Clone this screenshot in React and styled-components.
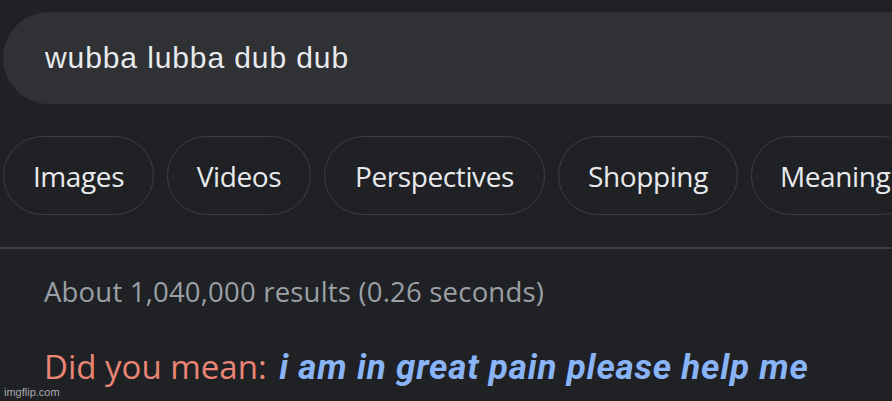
import React from 'react';
import styled, { createGlobalStyle } from 'styled-components';

const Global = createGlobalStyle`
  html, body {
    margin: 0;
    padding: 0;
    background: #202124;
  }
`;

const Page = styled.main`
  position: relative;
  width: 892px;
  height: 401px;
  overflow: hidden;
  background: #202124;
  display: flex;
  flex-direction: column;
`;

const SearchBar = styled.div`
  margin: 12px 0 0 3px;
  width: 1000px;
  height: 92px;
  border-radius: 46px;
  background: #303134;
  display: flex;
  align-items: center;
  padding-left: 42px;
  box-sizing: border-box;
  font-family: 'Liberation Sans', Arial, sans-serif;
  font-size: 30px;
  letter-spacing: 0.9px;
  color: #e8eaed;
`;

const ChipRow = styled.nav`
  margin: 32px 0 0 3px;
  display: flex;
  gap: 13px;
  white-space: nowrap;
`;

const Chip = styled.div`
  flex: none;
  width: ${(p) => p.$w}px;
  height: 79px;
  box-sizing: border-box;
  border: 1.5px solid #3c4043;
  border-radius: 40px;
  display: flex;
  align-items: center;
  justify-content: ${(p) => (p.$left ? 'flex-start' : 'center')};
  padding-left: ${(p) => (p.$left ? 28 : 0)}px;
  font-family: 'Open Sans', sans-serif;
  font-size: 28px;
  letter-spacing: -0.4px;
  color: #e8eaed;
`;

const Divider = styled.hr`
  margin: 32px 0 0;
  border: none;
  height: 2px;
  background: #3c4043;
`;

const Stats = styled.p`
  margin: 26px 0 0 44px;
  font-family: 'Open Sans', sans-serif;
  font-size: 27.5px;
  letter-spacing: 0.2px;
  line-height: 34px;
  color: #9aa0a6;
`;

const Suggestion = styled.p`
  margin: 38px 0 0 44px;
  font-family: 'Open Sans', sans-serif;
  font-size: 33px;
  line-height: 40px;
  color: #ea8575;
  white-space: nowrap;
`;

const Correction = styled.a`
  margin-left: 4px;
  font-family: Roboto, 'Liberation Sans', sans-serif;
  font-weight: 700;
  font-style: italic;
  font-size: 35px;
  letter-spacing: 0.8px;
  color: #8ab4f8;
  text-decoration: none;
`;

const Watermark = styled.span`
  position: absolute;
  left: 4px;
  bottom: 3px;
  font-family: 'Liberation Sans', Arial, sans-serif;
  font-size: 11px;
  color: #a9abad;
`;

const chips = [
  { label: 'Images', w: 151 },
  { label: 'Videos', w: 144 },
  { label: 'Perspectives', w: 221 },
  { label: 'Shopping', w: 180 },
  { label: 'Meaning', w: 170, left: true },
];

export default function App() {
  return (
    <Page>
      <Global />
      <SearchBar>wubba lubba dub dub</SearchBar>
      <ChipRow>
        {chips.map((c) => (
          <Chip key={c.label} $w={c.w} $left={c.left}>
            {c.label}
          </Chip>
        ))}
      </ChipRow>
      <Divider />
      <Stats>About 1,040,000 results (0.26 seconds)</Stats>
      <Suggestion>
        Did you mean: <Correction href="#">i am in great pain please help me</Correction>
      </Suggestion>
      <Watermark>imgflip.com</Watermark>
    </Page>
  );
}
